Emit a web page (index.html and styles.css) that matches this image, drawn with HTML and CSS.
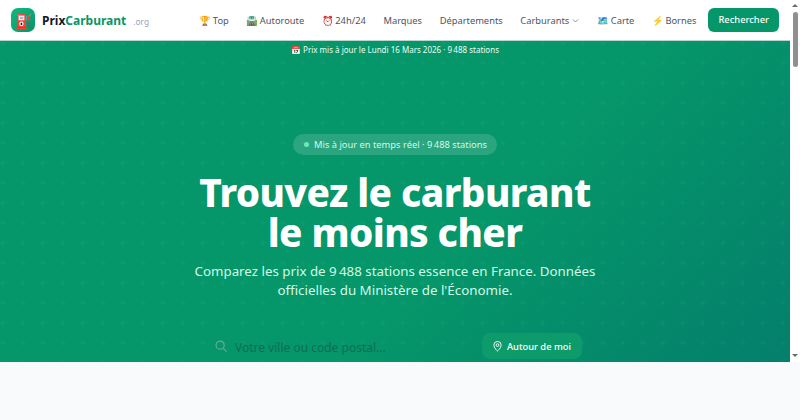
FILE: index.html
```html
<!DOCTYPE html>
<html lang="fr">
<head>
  <meta charset="UTF-8">
  <meta name="viewport" content="width=device-width, initial-scale=1.0">
  <title>PrixCarburant.org</title>
  <link rel="stylesheet" href="styles.css">
</head>
<body>

  <div class="window">
    <div class="page">
      <header class="navbar">
        <a class="brand" href="#">
          <span class="brand-icon">⛽</span>
          <span class="brand-name">Prix<span class="brand-accent">Carburant</span></span>
          <span class="brand-tld">.org</span>
        </a>
        <nav class="nav-links">
          <a href="#">🏆 Top</a>
          <a href="#">🛣️ Autoroute</a>
          <a href="#">⏰ 24h/24</a>
          <a href="#">Marques</a>
          <a href="#">Départements</a>
          <a href="#">Carburants
            <svg class="chevron" viewBox="0 0 24 24" width="9" height="9"><path d="M5 9l7 7 7-7"/></svg>
          </a>
          <a href="#">🗺️ Carte</a>
          <a href="#">⚡ Bornes</a>
        </nav>
        <a class="search-button" href="#">Rechercher</a>
      </header>

      <section class="hero">
        <p class="update-line">📅 Prix mis à jour le Lundi 16 Mars 2026 · 9&#8239;488 stations</p>
        <div class="hero-content">
          <div class="live-badge"><span class="live-dot"></span>Mis à jour en temps réel · 9&#8239;488 stations</div>
          <h1>Trouvez le carburant<br>le moins cher</h1>
          <p class="subtitle">Comparez les prix de 9&#8239;488 stations essence en France. Données officielles du Ministère de l'Économie.</p>
          <form class="search-box">
            <svg class="search-icon" viewBox="0 0 24 24" width="14" height="14"><circle cx="10.5" cy="10.5" r="7"/><path d="M16 16l5.5 5.5"/></svg>
            <span class="search-placeholder">Votre ville ou code postal...</span>
            <button class="near-button" type="button">
              <svg viewBox="0 0 24 24" width="11" height="11"><path d="M12 22s8-7 8-13A8 8 0 0 0 4 9c0 6 8 13 8 13z"/><circle cx="12" cy="9" r="3"/></svg>
              Autour de moi
            </button>
          </form>
        </div>
      </section>
    </div>

    <div class="scrollbar">
      <span class="arrow-up"></span>
      <span class="thumb"></span>
      <span class="arrow-down"></span>
    </div>
  </div>

</body>
</html>
```

FILE: styles.css
```css
body {
  font-family: "Noto Sans", sans-serif;
  margin: 0;
  padding: 0;
  height: 420px;
  overflow: hidden;
  background-color: #f8fafc;
}
a {
  text-decoration: none;
  color: inherit;
}

.window {
  display: flex;
  height: 362px;
  background: #fff;
}
.page {
  flex: 1;
  min-width: 0;
}

.scrollbar {
  display: flex;
  flex-direction: column;
  align-items: center;
  width: 10px;
  padding-top: 4px;
  box-sizing: border-box;
}
.arrow-up {
  width: 0;
  height: 0;
  border-left: 3px solid transparent;
  border-right: 3px solid transparent;
  border-bottom: 3px solid #6b6b6b;
}
.thumb {
  width: 5px;
  height: 55px;
  margin-top: 5px;
  border-radius: 3px;
  background: #8f8f8f;
}
.arrow-down {
  width: 0;
  height: 0;
  margin-top: auto;
  margin-bottom: 5px;
  border-left: 3px solid transparent;
  border-right: 3px solid transparent;
  border-top: 3px solid #6b6b6b;
}

.navbar {
  display: flex;
  align-items: center;
  height: 40px;
  padding: 0 11px;
  background: #fff;
  border-bottom: 1px solid #b9d8cd;
}
.brand {
  display: flex;
  align-items: center;
}
.brand-icon {
  display: flex;
  align-items: center;
  justify-content: center;
  width: 24px;
  height: 24px;
  border-radius: 7px;
  background: linear-gradient(135deg, #10b981, #059669);
  font-size: 14px;
  margin-right: 7px;
}
.brand-name {
  font-size: 12px;
  font-weight: 700;
  color: #111827;
}
.brand-accent {
  color: #059669;
}
.brand-tld {
  font-size: 8.33px;
  color: #9ca3af;
  margin: 3px 0 0 7px;
}
.nav-links {
  display: flex;
  align-items: center;
  gap: 17.6px;
  margin-left: auto;
  margin-right: 12px;
  font-size: 9.33px;
  word-spacing: -1px;
  white-space: nowrap;
  color: #4b5563;
}
.chevron {
  vertical-align: -1px;
  fill: none;
  stroke: #6b7280;
  stroke-width: 2;
}
.search-button {
  padding: 5px 10px;
  line-height: 14px;
  border-radius: 6px;
  background: #059669;
  color: #fff;
  font-size: 9.33px;
  font-weight: 500;
}

.hero {
  height: 321px;
  overflow: hidden;
  color: #fff;
  background-color: #059669;
  background-image:
    url("data:image/svg+xml,%3Csvg xmlns='http://www.w3.org/2000/svg' width='20' height='20'%3E%3Cpath d='M10 7v6M7 10h6' stroke='%23fff' stroke-opacity='.04' stroke-width='1'/%3E%3C/svg%3E"),
    linear-gradient(135deg, #059669 0%, #059669 60%, #047f6c 100%);
  background-position: -7px -8px, 0 0;
}
.update-line {
  margin: 0;
  padding-top: 2px;
  text-align: center;
  font-size: 8px;
  line-height: 14px;
  color: #ecfdf5;
}
.hero-content {
  display: flex;
  flex-direction: column;
  align-items: center;
  padding-top: 77px;
}
.live-badge {
  display: flex;
  align-items: center;
  height: 21px;
  padding: 0 10px 0 11px;
  border-radius: 11px;
  background: rgba(255, 255, 255, 0.15);
  font-size: 9.33px;
  color: #d1fae5;
}
.live-dot {
  width: 5px;
  height: 5px;
  border-radius: 50%;
  background: #6ee7b7;
  margin-right: 5px;
}
.hero h1 {
  margin: 17px 0 0;
  text-align: center;
  font-size: 38.67px;
  line-height: 40px;
  font-weight: 800;
  letter-spacing: -0.58px;
}
.subtitle {
  width: 420px;
  margin: 10px 0 0;
  text-align: center;
  font-size: 13.33px;
  line-height: 19px;
  color: #d1fae5;
}
.search-box {
  display: flex;
  align-items: center;
  width: 374px;
  height: 26px;
  margin-top: 33px;
}
.search-icon {
  margin-left: 6px;
  fill: none;
  stroke: #6fa896;
  stroke-width: 2;
}
.search-placeholder {
  margin-left: 7px;
  padding-top: 2px;
  flex: 1;
  font-size: 12px;
  color: #0b6e55;
}
.near-button {
  display: flex;
  align-items: center;
  gap: 4px;
  height: 26px;
  padding: 0 11px 0 10px;
  border: none;
  border-radius: 8px;
  background: #0d9b6b;
  color: #fff;
  font-family: inherit;
  font-size: 9.33px;
  font-weight: 500;
}
.near-button svg {
  fill: none;
  stroke: #fff;
  stroke-width: 2;
}
```
